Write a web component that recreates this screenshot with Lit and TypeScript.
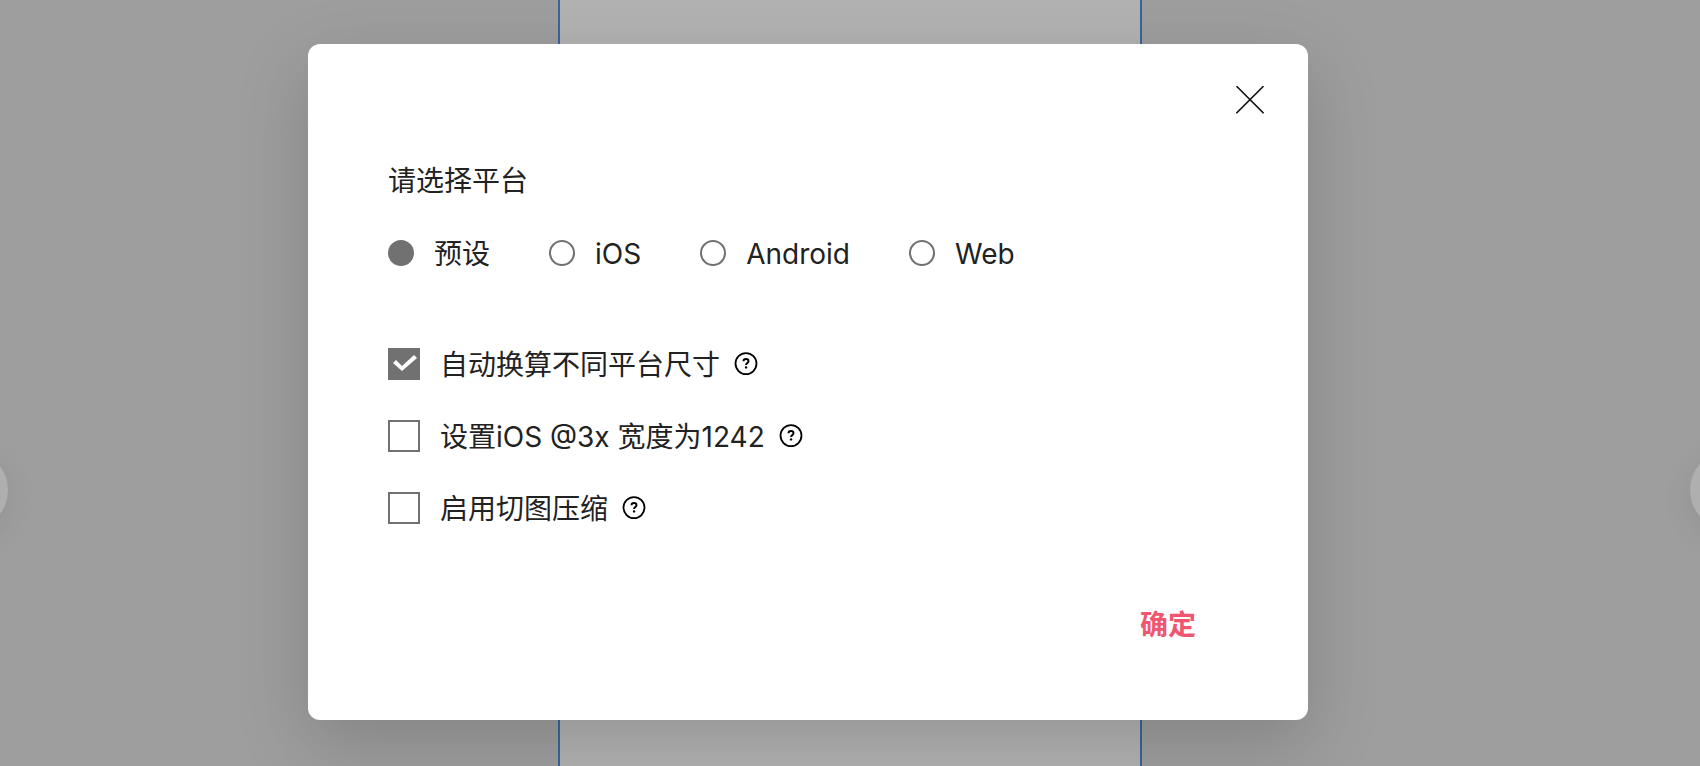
import { LitElement, html, css } from "lit";
import { customElement, state } from "lit/decorators.js";

interface Option {
  id: string;
  label: string;
  checked: boolean;
}

@customElement("app-root")
export class AppRoot extends LitElement {
  static styles = css`
    :host {
      display: block;
      font-family: Inter, "Noto Sans CJK SC", sans-serif;
      font-size: 28px;
      line-height: 40px;
      color: #222;
    }
    *,
    *::before {
      box-sizing: border-box;
    }
    .stage {
      position: relative;
      min-height: 100vh;
      overflow: hidden;
      background: #9e9e9e;
    }
    .canvas {
      position: absolute;
      inset: 0;
      display: flex;
      justify-content: center;
    }
    .artboard {
      width: 584px;
      background: #b2b2b2;
      border: solid #38659a;
      border-width: 0 2px;
    }
    .nav {
      position: absolute;
      top: 450px;
      width: 80px;
      height: 80px;
      padding: 0;
      border: 0;
      border-radius: 50%;
      background: #afafaf;
      box-shadow: 0 8px 32px rgba(0, 0, 0, 0.08);
    }
    .prev {
      left: -72px;
    }
    .next {
      right: -70px;
    }
    .overlay {
      position: relative;
      display: flex;
      justify-content: center;
      padding: 44px 84px 46px 0;
    }
    .dialog {
      display: flex;
      flex-direction: column;
      width: 100%;
      max-width: 1000px;
      padding: 42px 44px 75px 80px;
      border-radius: 12px;
      background: #fff;
      box-shadow: 0 24px 72px rgba(0, 0, 0, 0.17);
    }
    button {
      font: inherit;
      cursor: pointer;
    }
    .close {
      align-self: flex-end;
      width: 28px;
      height: 28px;
      padding: 0;
      border: 0;
      background: none;
    }
    svg {
      display: block;
    }
    fieldset {
      min-width: 0;
      margin: 0;
      padding: 0;
      border: 0;
    }
    .platforms {
      margin-top: 47px;
    }
    legend {
      padding: 0;
    }
    .radios {
      display: flex;
      flex-wrap: wrap;
      gap: 20px 59px;
      margin-top: 31px;
    }
    .choice {
      display: flex;
      align-items: center;
      gap: 20px;
      cursor: pointer;
    }
    .text {
      padding-top: 2px;
    }
    input {
      appearance: none;
      flex: none;
      margin: 0;
      border: 2px solid #717171;
      background: #fff;
      cursor: pointer;
    }
    .radio {
      width: 26px;
      height: 26px;
      border-radius: 50%;
    }
    .radio:checked {
      background: #717171;
    }
    .options {
      display: flex;
      flex-direction: column;
      gap: 30px;
      margin-top: 69px;
    }
    .option {
      display: flex;
      align-items: center;
      gap: 14px;
    }
    .check {
      display: grid;
      width: 32px;
      height: 32px;
    }
    .check:checked {
      background: #717171;
    }
    .check:checked::before {
      content: "";
      width: 28px;
      height: 28px;
      background: #fff;
      clip-path: polygon(3px 13px, 6px 10px, 12px 16px, 24px 5px, 27px 8px, 12px 21px);
    }
    .help {
      width: 24px;
      height: 24px;
      padding: 0;
      border: 0;
      background: none;
      color: #000;
    }
    .confirm {
      align-self: flex-end;
      margin-top: 76px;
      margin-right: 68px;
      padding: 0;
      border: 0;
      background: none;
      color: #f0566f;
      font-weight: 700;
    }
  `;

  @state() private platform = "预设";

  @state() private options: Option[] = [
    { id: "convert", label: "自动换算不同平台尺寸", checked: true },
    { id: "width", label: "设置iOS @3x 宽度为1242", checked: false },
    { id: "compress", label: "启用切图压缩", checked: false },
  ];

  private toggle(id: string) {
    this.options = this.options.map((o) =>
      o.id === id ? { ...o, checked: !o.checked } : o
    );
  }

  private renderOption(o: Option) {
    return html`<div class="option">
      <label class="choice">
        <input
          class="check"
          type="checkbox"
          .checked=${o.checked}
          @change=${() => this.toggle(o.id)}
        />
        <span class="text">${o.label}</span>
      </label>
      <button class="help" type="button" aria-label="帮助">
        <svg width="24" height="24" viewBox="0 0 24 24" fill="none" stroke="currentColor">
          <circle cx="12" cy="11.6" r="10.5" stroke-width="1.8" />
          <path d="M9.5 9.3C9.5 7.8 10.5 7 12 7s2.5.9 2.5 2.2c0 1.8-2.4 1.9-2.4 3.8" stroke-width="1.9" />
          <circle cx="12.1" cy="15.4" r="1.2" fill="currentColor" stroke="none" />
        </svg>
      </button>
    </div>`;
  }

  render() {
    return html`<main class="stage">
      <div class="canvas"><div class="artboard"></div></div>
      <button class="nav prev" type="button" aria-label="上一张"></button>
      <button class="nav next" type="button" aria-label="下一张"></button>
      <div class="overlay">
        <form class="dialog" role="dialog" aria-labelledby="title">
          <button class="close" type="button" aria-label="关闭">
            <svg width="28" height="28" viewBox="0 0 28 28" stroke="#111" stroke-width="1.6">
              <path d="M.4.1l27.2 27.2M27.6.1L.4 27.3" />
            </svg>
          </button>
          <fieldset class="platforms">
            <legend id="title">请选择平台</legend>
            <div class="radios">
              ${["预设", "iOS", "Android", "Web"].map(
                (name) => html`<label class="choice">
                  <input
                    class="radio"
                    type="radio"
                    name="platform"
                    .checked=${this.platform === name}
                    @change=${() => (this.platform = name)}
                  />
                  <span class="text">${name}</span>
                </label>`
              )}
            </div>
          </fieldset>
          <div class="options">${this.options.map((o) => this.renderOption(o))}</div>
          <button class="confirm" type="button">确定</button>
        </form>
      </div>
    </main>`;
  }
}
